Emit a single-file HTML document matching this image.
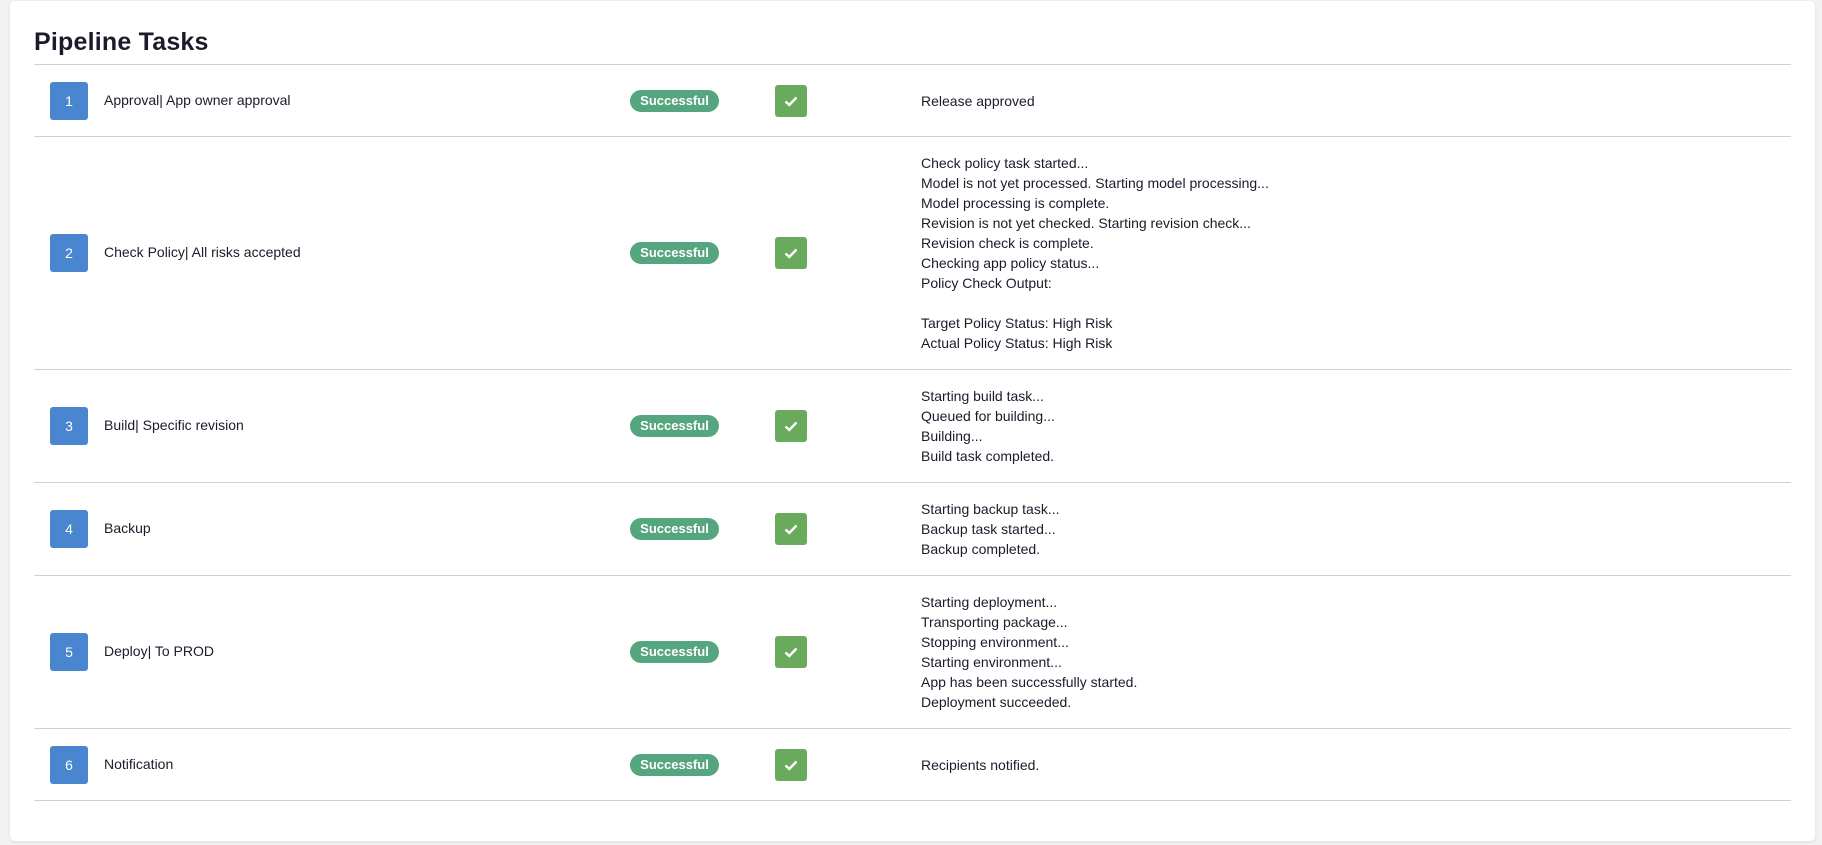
<!DOCTYPE html>
<html><head><meta charset="utf-8"><style>
body{margin:0;background:#f2f2f2;font-family:"Liberation Sans",sans-serif;color:#1b1b2b;}
.card{position:absolute;left:10px;top:1px;width:1805px;height:840px;background:#fff;border-radius:5px;box-shadow:0 1px 4px rgba(0,0,0,.08);}
h1{position:absolute;left:24px;top:27px;margin:0;font-size:25px;font-weight:600;letter-spacing:0.2px;}
.tbl{position:absolute;left:24px;top:63px;width:1757px;border-top:1px solid #cfcfd4;}
.row{position:relative;border-bottom:1px solid #cfcfd4;padding:16px 0;min-height:39px;box-sizing:content-box;}
.num{position:absolute;left:16px;top:50%;margin-top:-19px;width:38px;height:38px;background:#4a86d0;border-radius:3px;color:#fff;font-size:14px;line-height:38px;text-align:center;}
.name{position:absolute;left:70px;top:50%;margin-top:-11px;font-size:14px;line-height:20px;}
.badge{position:absolute;left:596px;top:50%;margin-top:-11px;width:89px;height:22px;background:#55a57e;border-radius:11px;color:#fff;font-weight:bold;font-size:13px;line-height:22px;text-align:center;}
.chk{position:absolute;left:741px;top:50%;margin-top:-16px;width:32px;height:32px;background:#6aaa5c;border-radius:3px;}
.chk svg{position:absolute;left:8px;top:8px;}
.msg{margin-left:887px;font-size:14px;line-height:20px;white-space:pre;min-height:39px;display:flex;align-items:center;}
</style></head><body>
<div class="card">
<h1>Pipeline Tasks</h1>
<div class="tbl">
<div class="row"><div class="num">1</div><div class="name">Approval| App owner approval</div><div class="badge">Successful</div><div class="chk"><svg width="16" height="16" viewBox="0 0 16 16"><path d="M2.5 8.5 L6.3 12 L13.5 4.5" stroke="#fff" stroke-width="2.4" fill="none"/></svg></div><div class="msg">Release approved</div></div>
<div class="row"><div class="num">2</div><div class="name">Check Policy| All risks accepted</div><div class="badge">Successful</div><div class="chk"><svg width="16" height="16" viewBox="0 0 16 16"><path d="M2.5 8.5 L6.3 12 L13.5 4.5" stroke="#fff" stroke-width="2.4" fill="none"/></svg></div><div class="msg">Check policy task started...
Model is not yet processed. Starting model processing...
Model processing is complete.
Revision is not yet checked. Starting revision check...
Revision check is complete.
Checking app policy status...
Policy Check Output:

Target Policy Status: High Risk
Actual Policy Status: High Risk</div></div>
<div class="row"><div class="num">3</div><div class="name">Build| Specific revision</div><div class="badge">Successful</div><div class="chk"><svg width="16" height="16" viewBox="0 0 16 16"><path d="M2.5 8.5 L6.3 12 L13.5 4.5" stroke="#fff" stroke-width="2.4" fill="none"/></svg></div><div class="msg">Starting build task...
Queued for building...
Building...
Build task completed.</div></div>
<div class="row"><div class="num">4</div><div class="name">Backup</div><div class="badge">Successful</div><div class="chk"><svg width="16" height="16" viewBox="0 0 16 16"><path d="M2.5 8.5 L6.3 12 L13.5 4.5" stroke="#fff" stroke-width="2.4" fill="none"/></svg></div><div class="msg">Starting backup task...
Backup task started...
Backup completed.</div></div>
<div class="row"><div class="num">5</div><div class="name">Deploy| To PROD</div><div class="badge">Successful</div><div class="chk"><svg width="16" height="16" viewBox="0 0 16 16"><path d="M2.5 8.5 L6.3 12 L13.5 4.5" stroke="#fff" stroke-width="2.4" fill="none"/></svg></div><div class="msg">Starting deployment...
Transporting package...
Stopping environment...
Starting environment...
App has been successfully started.
Deployment succeeded.</div></div>
<div class="row"><div class="num">6</div><div class="name">Notification</div><div class="badge">Successful</div><div class="chk"><svg width="16" height="16" viewBox="0 0 16 16"><path d="M2.5 8.5 L6.3 12 L13.5 4.5" stroke="#fff" stroke-width="2.4" fill="none"/></svg></div><div class="msg">Recipients notified.</div></div>
</div>
</div>
</body></html>
